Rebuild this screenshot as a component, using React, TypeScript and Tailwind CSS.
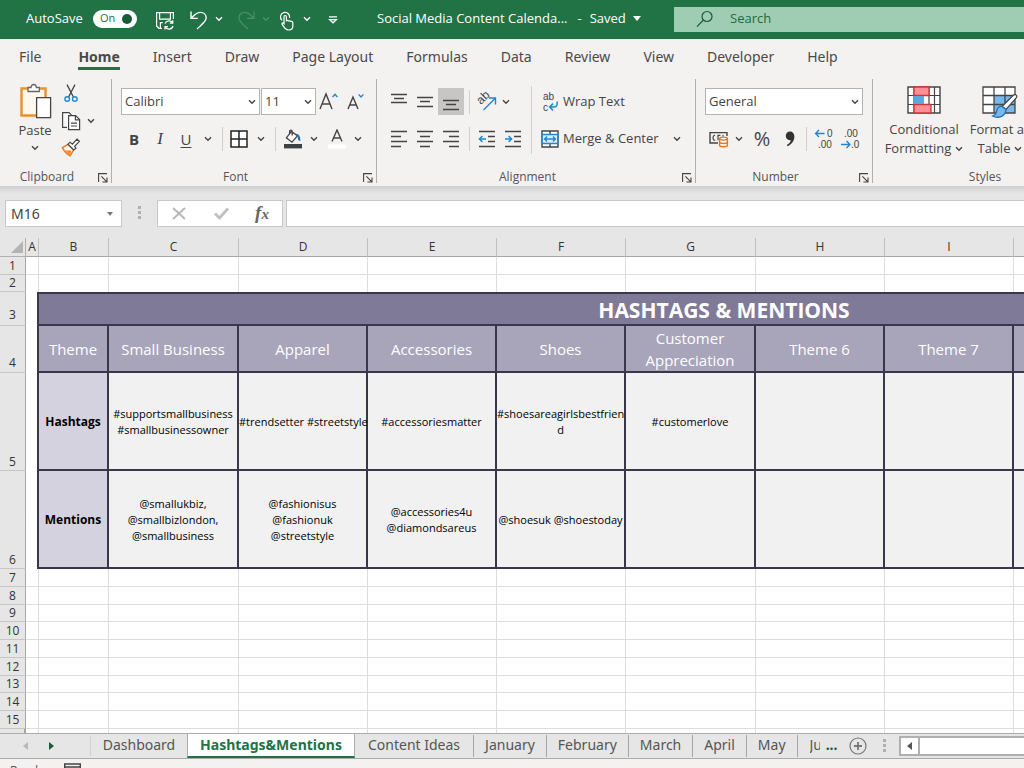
import type { ReactNode } from "react";
import clsx from "clsx";

const MENU = ["File", "Home", "Insert", "Draw", "Page Layout", "Formulas", "Data", "Review", "View", "Developer", "Help"];

const COLUMNS = [
  { name: "A", width: "w-[13px]" },
  { name: "B", width: "w-[70px]" },
  { name: "C", width: "w-[130px]" },
  { name: "D", width: "w-[129px]" },
  { name: "E", width: "w-[129px]" },
  { name: "F", width: "w-[129px]" },
  { name: "G", width: "w-[130px]" },
  { name: "H", width: "w-[129px]" },
  { name: "I", width: "w-[129px]" },
  { name: "J", width: "w-[129px]" },
  { name: "K", width: "w-[129px]" },
  { name: "L", width: "w-[139px]" },
];

const THEMES = [
  "Small Business",
  "Apparel",
  "Accessories",
  "Shoes",
  "Customer\nAppreciation",
  "Theme 6",
  "Theme 7",
  "Theme 8",
  "Theme 9",
  "Theme 10",
];

const HASHTAGS = [
  "#supportsmallbusiness\n#smallbusinessowner",
  "#trendsetter #streetstyle",
  "#accessoriesmatter",
  "#shoesareagirlsbestfrien\nd",
  "#customerlove",
  "",
  "",
  "",
  "",
  "",
];

const MENTIONS = [
  "@smallukbiz,\n@smallbizlondon,\n@smallbusiness",
  "@fashionisus\n@fashionuk\n@streetstyle",
  "@accessories4u\n@diamondsareus",
  "@shoesuk @shoestoday",
  "",
  "",
  "",
  "",
  "",
  "",
];

const EMPTY_ROWS = [
  { n: 7, height: "h-[18px]" },
  { n: 8, height: "h-[18px]" },
  { n: 9, height: "h-[17px]" },
  { n: 10, height: "h-[18px]" },
  { n: 11, height: "h-[18px]" },
  { n: 12, height: "h-[18px]" },
  { n: 13, height: "h-[17px]" },
  { n: 14, height: "h-[18px]" },
  { n: 15, height: "h-[18px]" },
  { n: 16, height: "h-[18px]" },
];

const SHEETS = ["Content Ideas", "January", "February", "March", "April", "May"];

/* ---------- small shared pieces ---------- */

function Chevron({ className = "" }: { className?: string }) {
  return (
    <svg width="8" height="6" viewBox="0 0 8 6" fill="none" stroke="currentColor" strokeWidth="1.4" className={clsx("shrink-0", className)}>
      <path d="M1 1.2 4 4.2 7 1.2" />
    </svg>
  );
}

function IconButton({ label, className, children }: { label: string; className?: string; children: ReactNode }) {
  return (
    <button type="button" aria-label={label} className={clsx("flex shrink-0 items-center justify-center", className)}>
      {children}
    </button>
  );
}

function DropButton({ label, className = "w-[26px]" }: { label: string; className?: string }) {
  return (
    <IconButton label={label} className={clsx("h-[26px]", className)}>
      <Chevron />
    </IconButton>
  );
}

function Divider({ className = "h-6" }: { className?: string }) {
  return <div className={clsx("w-px shrink-0 bg-[#d2d0ce]", className)} />;
}

function Lines({ d }: { d: string }) {
  return (
    <svg width="18" height="18" viewBox="0 0 18 18" fill="none" stroke="#444" strokeWidth="1.3">
      <path d={d} />
    </svg>
  );
}

function Combo({ label, value, className }: { label: string; value: string; className: string }) {
  return (
    <div className={clsx("relative h-[27px] shrink-0", className)}>
      <select
        aria-label={label}
        defaultValue={value}
        className="h-full w-full appearance-none border border-[#b5b3b1] bg-white pl-[3px] text-[13px] text-[#444] outline-none"
      >
        <option>{value}</option>
      </select>
      <Chevron className="pointer-events-none absolute top-[11px] right-[4px]" />
    </div>
  );
}

function Group({ title, launcher = true, className, children }: { title: string; launcher?: boolean; className: string; children: ReactNode }) {
  return (
    <section className={clsx("mb-[3px] flex shrink-0 flex-col border-[#b3b1af]", launcher && "border-r", className)}>
      <div className={clsx("h-[92px]", launcher && "pl-[9px]")}>{children}</div>
      <div className={clsx("relative flex h-3 items-center justify-center", launcher && "pr-[17px]")}>
        <h2 className="text-[12px] leading-4 text-[#555]">{title}</h2>
        {launcher && (
          <button type="button" aria-label={`${title} settings`} className="absolute right-[3px] bottom-0">
            <svg width="10" height="10" viewBox="0 0 10 10" fill="none" stroke="#444" strokeWidth="1.1">
              <path d="M.6 9V.6H9M3.4 3.4 8.6 8.6M9 4.4V9H4.4" />
            </svg>
          </button>
        )}
      </div>
    </section>
  );
}

/* ---------- title bar ---------- */

function TitleBar() {
  return (
    <header className="flex h-[39px] shrink-0 items-center overflow-hidden bg-[#217346] pb-[2px] pl-[26px] text-[13px] text-white">
      <span className="w-[67px] shrink-0">AutoSave</span>
      <button
        type="button"
        role="switch"
        aria-checked="true"
        aria-label="AutoSave"
        className="flex h-[18px] w-11 shrink-0 items-center justify-between rounded-full bg-white pr-[5px] pl-[7px] text-[11px] text-[#217346]"
      >
        On
        <span className="size-[10px] rounded-full bg-[#185c37]" />
      </button>
      <IconButton label="Save" className="mt-1 ml-[18px] w-[20px]">
        <svg width="20" height="20" viewBox="0 0 20 20" fill="none" stroke="currentColor" strokeWidth="1.2">
          <path d="M18.4 8V1.6H1.6V15l2.4 2.4h3M4.6 1.8v6.4H15.4V1.8M5.4 17.2v-5.6h2.4" />
          <path d="M10 12.6a4.2 4.2 0 0 1 7.6-.6M17.8 9.2v3h-3M18 15a4.2 4.2 0 0 1-7.8.8M10 18.6v-3h3" />
        </svg>
      </IconButton>
      <IconButton label="Undo" className="mt-[2px] ml-[14px] w-[20px]">
        <svg width="20" height="20" viewBox="0 0 20 20" fill="none" stroke="currentColor" strokeWidth="1.4">
          <path d="M2 1.6v6.8h6.8M2.2 8.2C5 5 8 2.4 11.4 2.4c3.4 0 5.8 2.4 5.8 5.4 0 4-4.6 6.6-9.2 11.2" />
        </svg>
      </IconButton>
      <DropButton label="Undo history" className="w-5" />
      <IconButton label="Redo" className="mt-[2px] ml-2 w-[20px] text-[#4a8f68]">
        <svg width="20" height="20" viewBox="0 0 20 20" fill="none" stroke="currentColor" strokeWidth="1.3">
          <path d="M17 1.6v6.8h-6.8M16.8 8.2C14 5 11 2.4 7.6 2.4 4.2 2.4 1.8 4.8 1.8 7.8c0 4 4.6 6.6 9.2 11.2" />
        </svg>
      </IconButton>
      <IconButton label="Redo history" className="w-[18px] text-[#4a8f68]">
        <Chevron />
      </IconButton>
      <IconButton label="Touch mode" className="mt-1 ml-[3px] w-[18px]">
        <svg width="18" height="20" viewBox="0 0 18 20" fill="none" stroke="currentColor" strokeWidth="1.2">
          <path d="M4 9.4A4.6 4.6 0 1 1 11.6 6.8" />
          <path d="M6 12.6V6c0-2 2.4-2 2.4 0v4.4c0-1.4 2.2-1.2 2.2.2 0-1.2 2.2-1 2.2.4 0-1.2 2-.8 2 .6V15c0 2.4-1.6 4-4.2 4-3 0-4.2-1.6-6.4-5.6-.8-1.6.8-2 1.8-.8z" />
        </svg>
      </IconButton>
      <DropButton label="Touch mode options" className="w-[22px]" />
      <IconButton label="Customize toolbar" className="mt-[2px] ml-1 w-[22px]">
        <svg width="10" height="8" viewBox="0 0 10 8" fill="none" stroke="currentColor" strokeWidth="1.3">
          <path d="M1 .8h8M1.6 3.6h6.8L5 6.8z" />
        </svg>
      </IconButton>
      <button type="button" className="ml-[33px] flex w-[297px] shrink-0 items-center whitespace-nowrap">
        <span>Social Media Content Calenda...</span>
        <span className="ml-[10px]">-</span>
        <span className="ml-2">Saved</span>
        <svg width="8" height="5" viewBox="0 0 8 5" fill="currentColor" className="ml-[7px]">
          <path d="M0 0h8L4 5z" />
        </svg>
      </button>
      <label className="mt-px flex h-[25px] min-w-0 flex-1 items-center bg-[#9fcdb3] pl-[22px] text-[#185c37]">
        <svg width="18" height="18" viewBox="0 0 18 18" fill="none" stroke="currentColor" strokeWidth="1.2" className="shrink-0">
          <circle cx="11" cy="6.5" r="5" />
          <path d="M7.4 10 1 16.6" />
        </svg>
        <input
          type="text"
          aria-label="Search"
          placeholder="Search"
          className="ml-4 min-w-0 flex-1 bg-transparent outline-none placeholder:text-[#1c6b40]"
        />
      </label>
    </header>
  );
}

/* ---------- ribbon ---------- */

function MenuTabs() {
  return (
    <nav className="flex h-10 shrink-0 gap-[33px] overflow-hidden pl-[19px] font-['Noto_Sans',sans-serif] text-[14px] leading-5 text-[#4a4a4a]">
      {MENU.map((item) => (
        <button
          key={item}
          type="button"
          className={clsx(
            "mt-[7px] h-6 shrink-0 border-b-[3px] whitespace-nowrap first:mr-1",
            item === "Home" ? "border-[#217346] font-bold" : "border-transparent",
          )}
        >
          {item}
        </button>
      ))}
    </nav>
  );
}

function ClipboardGroup() {
  return (
    <Group title="Clipboard" className="w-[112px]">
      <div className="flex pt-1 pl-2">
        <button type="button" className="flex w-9 flex-col items-center text-[13px] text-[#444]">
          <svg width="34" height="37" viewBox="0 0 34 37" fill="none">
            <path d="M3.5 5.5h24v27h-24z" fill="#fff8ee" stroke="#e8912d" strokeWidth="2.4" />
            <path d="M10 8.5V4.5h3c.4-4 5-4 5.4 0h3v4z" fill="#fff" stroke="#666" strokeWidth="1.3" />
            <path d="M18.6 14.6h14v20h-14z" fill="#fff" stroke="#444" strokeWidth="1.3" />
          </svg>
          <span className="leading-5">Paste</span>
          <Chevron className="mt-[5px]" />
        </button>
        <div className="ml-2 flex flex-col">
          <IconButton label="Cut" className="h-5 w-5">
            <svg width="14" height="19" viewBox="0 0 14 19" fill="none">
              <path d="M3 .6 9.4 13M11 .6 4.6 13" stroke="#444" strokeWidth="1.3" />
              <circle cx="3.2" cy="15" r="2.3" stroke="#1e88d2" strokeWidth="1.4" />
              <circle cx="10.8" cy="15" r="2.3" stroke="#1e88d2" strokeWidth="1.4" />
            </svg>
          </IconButton>
          <div className="mt-2 flex h-5 items-center">
            <IconButton label="Copy">
              <svg width="20" height="20" viewBox="0 0 20 20" fill="none" stroke="#444" strokeWidth="1.2">
                <path d="M6 16.4H1.6V1.6H8l2.4 2.4" fill="#fff" />
                <path d="M7.6 4.6h7l4 4v10h-11z" fill="#fff" />
                <path d="M14.4 4.8v4h4M10 12.2h6M10 15h6" />
              </svg>
            </IconButton>
            <DropButton label="Copy options" className="w-5" />
          </div>
          <IconButton label="Format Painter" className="mt-[6px] h-5 w-5">
            <svg width="20" height="19" viewBox="0 0 20 19" fill="none">
              <path d="M1.4 9.6 7 6.4l5.6 5.4-3.4 6c-3-1.4-6-4.6-7.8-8.2z" fill="#fff3e4" stroke="#e8761c" strokeWidth="1.3" />
              <path d="M4 12.4h6.4L9 17.2z" fill="#f08a24" />
              <path d="m7 6.2 2-2 2.4 2 4.6-5 2.4 2.2-4.8 5 1.4 1.8-2.2 1.8z" fill="#fff" stroke="#444" strokeWidth="1.2" />
            </svg>
          </IconButton>
        </div>
      </div>
    </Group>
  );
}

function FontGroup() {
  return (
    <Group title="Font" className="w-[265px]">
      <div className="mt-[9px] flex h-[27px] items-center gap-px">
        <Combo label="Font" value="Calibri" className="w-[139px]" />
        <Combo label="Font size" value="11" className="w-[55px]" />
        <IconButton label="Increase font size" className="ml-[2px] w-5">
          <svg width="20" height="19" viewBox="0 0 20 19" fill="none" stroke="#444" strokeWidth="1.4">
            <path d="M1 17 7 2l6 15M3 12h8" />
            <path d="m13.6 5 2.4-2.6L18.4 5" stroke="#1e88d2" />
          </svg>
        </IconButton>
        <IconButton label="Decrease font size" className="ml-[6px] w-5">
          <svg width="20" height="19" viewBox="0 0 20 19" fill="none" stroke="#444" strokeWidth="1.4">
            <path d="M2 17 7 5l5 12M3.6 13h6.8" />
            <path d="m12.6 2.4 2.4 2.6 2.4-2.6" stroke="#1e88d2" />
          </svg>
        </IconButton>
      </div>
      <div className="mt-[11px] flex h-[26px] items-center text-[15px] text-[#444]">
        <button type="button" className="w-[26px] font-bold">
          B
        </button>
        <button type="button" className="w-[26px] font-['Liberation_Serif',serif] text-[17px] italic">
          I
        </button>
        <button type="button" className="w-[26px] underline underline-offset-2">
          U
        </button>
        <DropButton label="Underline style" className="w-[18px]" />
        <Divider className="ml-[5px] h-6" />
        <IconButton label="Borders" className="ml-[3px] w-[26px]">
          <svg width="18" height="18" viewBox="0 0 18 18" fill="#fff" stroke="#222" strokeWidth="1.5">
            <path d="M1 1h16v16H1zM9 1v16M1 9h16" />
          </svg>
        </IconButton>
        <DropButton label="Border options" className="w-[18px]" />
        <Divider className="ml-[5px] h-6" />
        <IconButton label="Fill color" className="ml-[3px] w-[28px]">
          <svg width="20" height="20" viewBox="0 0 20 20" fill="none">
            <path d="M8.4 2.4 3.4 8.8 9 13.2l5.4-6.4zM6.6 4.8V2.4c0-1.8 2.6-1.8 2.6 0v4" fill="#fff" stroke="#444" strokeWidth="1.3" />
            <path d="M12 4.8c3.4-.6 5.6 2.2 5.4 7.2-2.2-.2-3-1.6-2.6-5z" fill="#1e6fb8" />
            <path d="M1 15h18v4.4H1z" fill="#3b4346" />
          </svg>
        </IconButton>
        <DropButton label="Fill color options" className="w-[14px]" />
        <IconButton label="Font color" className="ml-1 w-6">
          <svg width="18" height="20" viewBox="0 0 18 20" fill="none">
            <path d="M4 12.5 9 1l5 11.500M5.600 9h6.800" stroke="#444" strokeWidth="1.4" />
            <path d="M0 15.5h18v4H0z" fill="#fff" />
          </svg>
        </IconButton>
        <DropButton label="Font color options" className="w-[18px]" />
      </div>
    </Group>
  );
}

function AlignmentGroup() {
  return (
    <Group title="Alignment" className="w-[319px]">
      <div className="flex">
        <div className="w-[145px]">
          <div className="mt-[9px] flex h-[27px] items-center">
            <IconButton label="Top align" className="h-[27px] w-[26px]">
              <Lines d="M1 1.5h16M4 5.5h10M1 9.5h16" />
            </IconButton>
            <IconButton label="Middle align" className="h-[27px] w-[26px]">
              <Lines d="M1 4.5h16M4 8.5h10M1 13.5h16" />
            </IconButton>
            <IconButton label="Bottom align" className="h-[27px] w-[26px] bg-[#c8c6c4]">
              <Lines d="M1 7.5h16M4 11.5h10M1 16.5h16" />
            </IconButton>
            <Divider className="ml-[5px] h-6" />
            <IconButton label="Orientation" className="ml-[6px] w-[22px]">
              <svg width="22" height="22" viewBox="0 0 22 22" fill="none">
                <text x="5" y="14" fontSize="12" fill="#444" transform="rotate(-45 5 14)" className="font-['Liberation_Sans',sans-serif]">
                  ab
                </text>
                <path d="M7.5 19 19 7.5M13 7h6.5v6.5" stroke="#1e88d2" strokeWidth="1.4" />
              </svg>
            </IconButton>
            <DropButton label="Orientation options" className="w-[16px]" />
          </div>
          <div className="mt-[11px] flex h-[26px] items-center">
            <IconButton label="Align left" className="w-[26px]">
              <Lines d="M1 1.5h16M1 6.5h10M1 11.5h16M1 16.5h10" />
            </IconButton>
            <IconButton label="Center" className="w-[26px]">
              <Lines d="M1 1.5h16M4 6.5h10M1 11.5h16M4 16.5h10" />
            </IconButton>
            <IconButton label="Align right" className="w-[26px]">
              <Lines d="M1 1.5h16M7 6.5h10M1 11.5h16M7 16.5h10" />
            </IconButton>
            <Divider className="ml-[5px] h-6" />
            <IconButton label="Decrease indent" className="ml-1 w-[26px]">
              <svg width="18" height="18" viewBox="0 0 18 18" fill="none" stroke="#444" strokeWidth="1.3">
                <path d="M1 1.5h16M10 6.5h7M10 11.5h7M1 16.5h16" />
                <path d="M8 9H1.600M4.400 6l-3 3 3 3" stroke="#1e88d2" strokeWidth="1.5" />
              </svg>
            </IconButton>
            <IconButton label="Increase indent" className="w-[26px]">
              <svg width="18" height="18" viewBox="0 0 18 18" fill="none" stroke="#444" strokeWidth="1.3">
                <path d="M1 1.5h16M10 6.5h7M10 11.5h7M1 16.5h16" />
                <path d="M1 9h6.400M4.600 6l3 3-3 3" stroke="#1e88d2" strokeWidth="1.5" />
              </svg>
            </IconButton>
          </div>
        </div>
        <Divider className="mt-[7px] h-[68px]" />
        <div className="ml-[9px] text-[13px] text-[#444]">
          <button type="button" className="mt-[9px] flex h-[27px] items-center gap-1 whitespace-nowrap">
            <svg width="18" height="24" viewBox="0 0 18 24" fill="none" fontSize="10" className="font-['Liberation_Sans',sans-serif]">
              <text x="2" y="10" fill="#444">
                ab
              </text>
              <text x="2" y="21" fill="#444">
                c
              </text>
              <path d="M16 11.5c1 4-1 5.5-3 5.5H9M12 13.6 8.600 17l3.400 3.400" stroke="#1e88d2" strokeWidth="1.5" />
            </svg>
            Wrap Text
          </button>
          <button type="button" className="mt-[11px] flex h-[26px] items-center gap-1 whitespace-nowrap">
            <svg width="18" height="18" viewBox="0 0 18 18" fill="#fff" stroke="#444" strokeWidth="1.4">
              <path d="M1 1h16v16H1zM9 1v4M9 13v4" />
              <path d="M1.200 4.500h15.600v9H1.200z" fill="#dcedfa" stroke="#1e88d2" />
              <path d="M3.600 9h10.800M6 6.600 3.600 9 6 11.400M12 6.600 14.400 9 12 11.400" fill="none" stroke="#1e88d2" />
            </svg>
            Merge &amp; Center
            <Chevron className="ml-[10px]" />
          </button>
        </div>
      </div>
    </Group>
  );
}

function NumberGroup() {
  return (
    <Group title="Number" className="w-[177px]">
      <div className="mt-[9px]">
        <Combo label="Number format" value="General" className="w-[158px]" />
      </div>
      <div className="mt-[11px] flex h-[26px] items-center text-[#444]">
        <IconButton label="Accounting format" className="ml-1 w-5">
          <svg width="20" height="18" viewBox="0 0 20 18" fill="none">
            <path d="M9 13H1V2.600h17V6" stroke="#444" strokeWidth="1.4" />
            <path d="M6 5.400c-2.600-.6-2.600 5.400 0 4.800M11.400 5.400H9v4.800M14 5v1.600" stroke="#444" strokeWidth="1.2" />
            <path d="M10.600 8.600v6.600c0 2 7.800 2 7.800 0V8.600" fill="#fff" stroke="#e8761c" strokeWidth="1.4" />
            <ellipse cx="14.500" cy="8.600" rx="3.900" ry="1.500" fill="#fff" stroke="#e8761c" strokeWidth="1.4" />
            <path d="M10.600 12c0 2 7.800 2 7.800 0" stroke="#e8761c" strokeWidth="1.4" />
          </svg>
        </IconButton>
        <DropButton label="Accounting options" className="w-5" />
        <button type="button" aria-label="Percent style" className="ml-px w-6 text-[20px]">
          %
        </button>
        <IconButton label="Comma style" className="ml-[6px] w-5">
          <svg width="10" height="16" viewBox="0 0 10 16" fill="#333">
            <path d="M5 .6c2.600 0 4.400 2 4.400 5 0 4.200-2.800 8-6.800 9.600l-.8-1.200c2.200-1.200 3.600-2.800 4-4.800C2.600 9.800.8 7.400.8 4.800.8 2.400 2.600.6 5 .6z" />
          </svg>
        </IconButton>
        <Divider className="ml-[6px] h-6" />
        <IconButton label="Increase decimal" className="ml-1 w-[26px]">
          <svg width="20" height="24" viewBox="0 0 20 24" fill="none" fontSize="10" className="font-['Liberation_Sans',sans-serif]">
            <text x="13" y="10" fill="#444">
              0
            </text>
            <text x="4" y="21" fill="#444">
              .00
            </text>
            <path d="M10.500 6.500H1.600M5 3.100 1.600 6.500 5 9.900" stroke="#1e88d2" strokeWidth="1.4" />
          </svg>
        </IconButton>
        <IconButton label="Decrease decimal" className="w-[26px]">
          <svg width="20" height="24" viewBox="0 0 20 24" fill="none" fontSize="10" className="font-['Liberation_Sans',sans-serif]">
            <text x="4" y="10" fill="#444">
              .00
            </text>
            <text x="11" y="21" fill="#444">
              .0
            </text>
            <path d="M1 17.500h8.900M6.500 14.100l3.400 3.400-3.400 3.400" stroke="#1e88d2" strokeWidth="1.4" />
          </svg>
        </IconButton>
      </div>
    </Group>
  );
}

function StylesGroup() {
  return (
    <Group title="Styles" launcher={false} className="w-[224px]">
      <div className="flex pt-[7px] text-[13px] leading-[19px] text-[#444]">
        <button type="button" className="ml-[6px] flex w-[90px] flex-col items-center">
          <svg width="34" height="28" viewBox="0 0 34 28" fill="none">
            <path d="M1 1h32v26H1z" fill="#fff" stroke="#444" strokeWidth="1.4" />
            <path d="M1 9.500h32M1 18.500h32M7 1v26M22 1v26M27.500 1v26" stroke="#444" strokeWidth="1.2" />
            <path d="M7 1h15v8.500H7zM7 18.500h17V27H7z" fill="#ff8f94" stroke="#d13438" strokeWidth="1.3" />
            <path d="M7 10h10v8H7z" fill="#5ea7e0" />
          </svg>
          <span className="mt-[6px]">Conditional</span>
          <span className="flex items-center gap-1">
            Formatting <Chevron />
          </span>
        </button>
        <button type="button" className="flex w-[62px] shrink-0 flex-col items-center whitespace-nowrap">
          <svg width="36" height="34" viewBox="0 0 36 34" fill="none" className="-mb-[6px]">
            <path d="M1 1h32v26H1z" fill="#fff" />
            <path d="M12 9.500h21V27H12z" fill="#7ab8ea" />
            <path d="M1 1h32v26H1zM1 9.500h32M1 18.500h32M12 1v26M23 1v26" stroke="#444" strokeWidth="1.3" />
            <path d="M20 20.500 31 9.500c2.600-2.200 5 .2 3 2.600L24 23.500z" fill="#fff" stroke="#444" strokeWidth="1.2" />
            <path d="M20 20.500c-3.600-.4-5 2-5.400 5-.4 2.400-2 3.600-4 4.500 5 2.600 13 1.200 13.400-6.500z" fill="#7ab8ea" stroke="#1e6fb8" strokeWidth="1.3" />
          </svg>
          <span className="mt-[6px]">Format as</span>
          <span className="flex items-center gap-1">
            Table <Chevron />
          </span>
        </button>
      </div>
    </Group>
  );
}

/* ---------- formula bar ---------- */

function FormulaBar() {
  return (
    <div className="flex h-[52px] shrink-0 items-start bg-gradient-to-b from-[#cfcfcf] via-[#e6e6e6] via-15% to-[#e6e6e6] pt-[14px] pl-[5px]">
      <div className="relative flex h-[27px] w-[117px] shrink-0 items-center border border-[#c8c8c8] bg-white">
        <input
          type="text"
          aria-label="Name box"
          defaultValue="M16"
          className="w-full bg-transparent pl-[5px] font-['Noto_Sans',sans-serif] text-[14px] text-[#444] outline-none"
        />
        <svg width="6" height="4" viewBox="0 0 6 4" fill="#777" className="absolute right-[8px]">
          <path d="M0 0h6L3 4z" />
        </svg>
      </div>
      <svg width="3" height="13" viewBox="0 0 3 13" fill="#b0b0b0" className="mx-4 mt-[6px] shrink-0">
        <path d="M0 0h3v3H0zM0 5h3v3H0zM0 10h3v3H0z" />
      </svg>
      <div className="flex h-[27px] w-[126px] shrink-0 items-center border border-[#c8c8c8] bg-white">
        <IconButton label="Cancel" className="w-[42px]">
          <svg width="14" height="13" viewBox="0 0 14 13" fill="none" stroke="#b8b8b8" strokeWidth="2">
            <path d="m1 1 12 11M13 1 1 12" />
          </svg>
        </IconButton>
        <IconButton label="Enter" className="w-[42px]">
          <svg width="15" height="13" viewBox="0 0 15 13" fill="none" stroke="#c0c0c0" strokeWidth="2.8">
            <path d="m1 6.500 4.500 4.500L14 1.400" />
          </svg>
        </IconButton>
        <button
          type="button"
          aria-label="Insert function"
          className="w-10 font-['Liberation_Serif',serif] text-[19px] leading-5 font-bold text-[#666] italic"
        >
          f<span className="text-[15px]">x</span>
        </button>
      </div>
      <input type="text" aria-label="Formula" className="ml-[3px] h-[27px] min-w-0 flex-1 border border-r-0 border-[#c8c8c8] bg-white outline-none" />
    </div>
  );
}

/* ---------- worksheet ---------- */

function RowHeader({ n, className }: { n: number; className?: string }) {
  return (
    <th
      scope="row"
      className={clsx(
        "border-r border-b border-r-[#a6a6a6] border-b-[#c6c6c6] bg-[#e6e6e6] p-0 align-bottom text-[12px] leading-4 font-normal text-[#333]",
        className,
      )}
    >
      {n}
    </th>
  );
}

const DARK = "border-r-2 border-b-2 border-[#3a374b]";

function Worksheet() {
  return (
    <main className="min-h-0 flex-1 overflow-hidden bg-white">
      <table className="w-[1411px] table-fixed border-separate border-spacing-0">
        <colgroup>
          <col className="w-[26px]" />
          {COLUMNS.map((c) => (
            <col key={c.name} className={c.width} />
          ))}
        </colgroup>
        <thead>
          <tr className="h-[19px] bg-[#e6e6e6] text-[12px] leading-4 text-[#333]">
            <td className="border-r border-b border-[#b0b0b0] p-0">
              <svg width="12" height="12" viewBox="0 0 12 12" fill="#b4b4b4" className="mr-[2px] ml-auto">
                <path d="M12 0v12H0z" />
              </svg>
            </td>
            {COLUMNS.map((c) => (
              <th key={c.name} scope="col" className="border-r border-b border-r-[#c0c0c0] border-b-[#a6a6a6] p-0 font-normal">
                {c.name}
              </th>
            ))}
          </tr>
        </thead>
        <tbody>
          <tr className="h-[18px]">
            <RowHeader n={1} />
            {COLUMNS.map((c) => (
              <td key={c.name} className="border-r border-b border-[#dedede] p-0" />
            ))}
          </tr>
          <tr className="h-[17px]">
            <RowHeader n={2} />
            {COLUMNS.map((c) => (
              <td key={c.name} className="border-r border-[#dedede] p-0" />
            ))}
          </tr>
          <tr className="h-[34px]">
            <RowHeader n={3} className="pb-[2px]" />
            <td className="border-r-2 border-[#3a374b] p-0" />
            <td
              colSpan={11}
              className={clsx(DARK, "border-t-2 bg-[#807a99] p-0 pt-[2px] text-center text-[21px] leading-7 font-bold text-white")}
            >
              HASHTAGS &amp; MENTIONS
            </td>
          </tr>
          <tr className="h-[47px] text-[15px] leading-[22px] text-white">
            <RowHeader n={4} className="pb-px" />
            <td className="border-r-2 border-[#3a374b] p-0" />
            {["Theme", ...THEMES].map((t) => (
              <th key={t} scope="col" className={clsx(DARK, "bg-[#a8a4ba] p-0 font-normal whitespace-pre-line")}>
                {t}
              </th>
            ))}
          </tr>
          {[
            { n: 5, title: "Hashtags", cells: HASHTAGS },
            { n: 6, title: "Mentions", cells: MENTIONS },
          ].map((row) => (
            <tr key={row.n} className="h-[98px] text-[11px] leading-4 text-black">
              <RowHeader n={row.n} />
              <td className="border-r-2 border-[#3a374b] p-0" />
              <th scope="row" className={clsx(DARK, "bg-[#d4d2de] p-0 pt-[2px] text-[12px] font-bold")}>
                {row.title}
              </th>
              {row.cells.map((text, i) => (
                <td key={i} className={clsx(DARK, "bg-[#f1f1f1] p-0 pt-[2px] text-center whitespace-pre")}>
                  {text}
                </td>
              ))}
            </tr>
          ))}
          {EMPTY_ROWS.map((row) => (
            <tr key={row.n} className={row.height}>
              <RowHeader n={row.n} className={row.n === 16 ? "border-r-2 border-r-[#217346] bg-[#d2d2d2]" : ""} />
              {COLUMNS.map((c) => (
                <td key={c.name} className="border-r border-b border-[#dedede] p-0" />
              ))}
            </tr>
          ))}
        </tbody>
      </table>
    </main>
  );
}

/* ---------- sheet tabs and status bar ---------- */

function SheetTabs() {
  return (
    <footer className="shrink-0">
      <div className="flex h-[26px] overflow-hidden border-t border-b border-[#ababab] bg-[#e6e6e6] font-['Noto_Sans',sans-serif] text-[14px] leading-5 text-[#555]">
        <IconButton label="Previous sheet" className="ml-[15px] w-5">
          <svg width="5" height="8" viewBox="0 0 5 8" fill="#b8b8b8">
            <path d="M5 0v8L0 4z" />
          </svg>
        </IconButton>
        <IconButton label="Next sheet" className="ml-[6px] w-5">
          <svg width="5" height="8" viewBox="0 0 5 8" fill="#185c37">
            <path d="M0 0v8l5-4z" />
          </svg>
        </IconButton>
        <Divider className="mt-[2px] ml-[29px] h-5 bg-[#a6a6a6]" />
        <button type="button" className="w-24 shrink-0 pb-[2px]">
          Dashboard
        </button>
        <button
          type="button"
          className="-mt-px h-[25px] w-[168px] shrink-0 border-x border-b-2 border-x-[#ababab] border-b-[#217346] bg-white font-bold text-[#217346]"
        >
          Hashtags&amp;Mentions
        </button>
        {SHEETS.map((name, i) => (
          <button
            key={name}
            type="button"
            className={clsx("my-px h-[22px] shrink-0 border-r border-[#a6a6a6] pb-[2px] whitespace-nowrap", i === 0 ? "px-[13px]" : "px-[11px]")}
          >
            {name}
          </button>
        ))}
        <button type="button" className="ml-3 w-[10px] shrink-0 overflow-hidden pb-[2px] text-left">
          June
        </button>
        <button type="button" aria-label="More sheets" className="ml-[5px] w-[14px] shrink-0 pb-[2px] font-bold text-[#185c37]">
          ...
        </button>
        <IconButton label="New sheet" className="ml-[10px] w-[18px]">
          <svg width="18" height="18" viewBox="0 0 18 18" fill="none" stroke="#777" strokeWidth="1.2">
            <circle cx="9" cy="9" r="8" />
            <path d="M9 5v8M5 9h8" strokeWidth="1.8" />
          </svg>
        </IconButton>
        <svg width="3" height="13" viewBox="0 0 3 13" fill="#b0b0b0" className="mt-[5px] ml-4 shrink-0">
          <path d="M0 0h3v3H0zM0 5h3v3H0zM0 10h3v3H0z" />
        </svg>
        <div className="mt-[2px] ml-[13px] flex h-5 min-w-0 flex-1 border-2 border-r-0 border-[#b0b0b0] bg-white">
          <IconButton label="Scroll left" className="w-[19px] border-r-2 border-[#b0b0b0]">
            <svg width="5" height="8" viewBox="0 0 5 8" fill="#555">
              <path d="M5 0v8L0 4z" />
            </svg>
          </IconButton>
        </div>
      </div>
      <div className="flex h-[9px] gap-3 overflow-hidden bg-[#f3f2f1] pt-1 pl-[10px] text-[12px] leading-4 text-[#555]">
        <span className="w-[42px]">Ready</span>
        <svg width="17" height="13" viewBox="0 0 17 13" fill="none" stroke="#444" strokeWidth="1.4">
          <path d="M.7 1h15.600v11H.7zM.7 4h15.600" />
        </svg>
      </div>
    </footer>
  );
}

export default function App() {
  return (
    <div className="flex h-screen flex-col overflow-hidden bg-[#f3f2f1] font-['Open_Sans','Noto_Sans',sans-serif]">
      <TitleBar />
      <MenuTabs />
      <div className="flex h-[107px] shrink-0 overflow-hidden text-[#444]">
        <ClipboardGroup />
        <FontGroup />
        <AlignmentGroup />
        <NumberGroup />
        <StylesGroup />
      </div>
      <FormulaBar />
      <Worksheet />
      <SheetTabs />
    </div>
  );
}
